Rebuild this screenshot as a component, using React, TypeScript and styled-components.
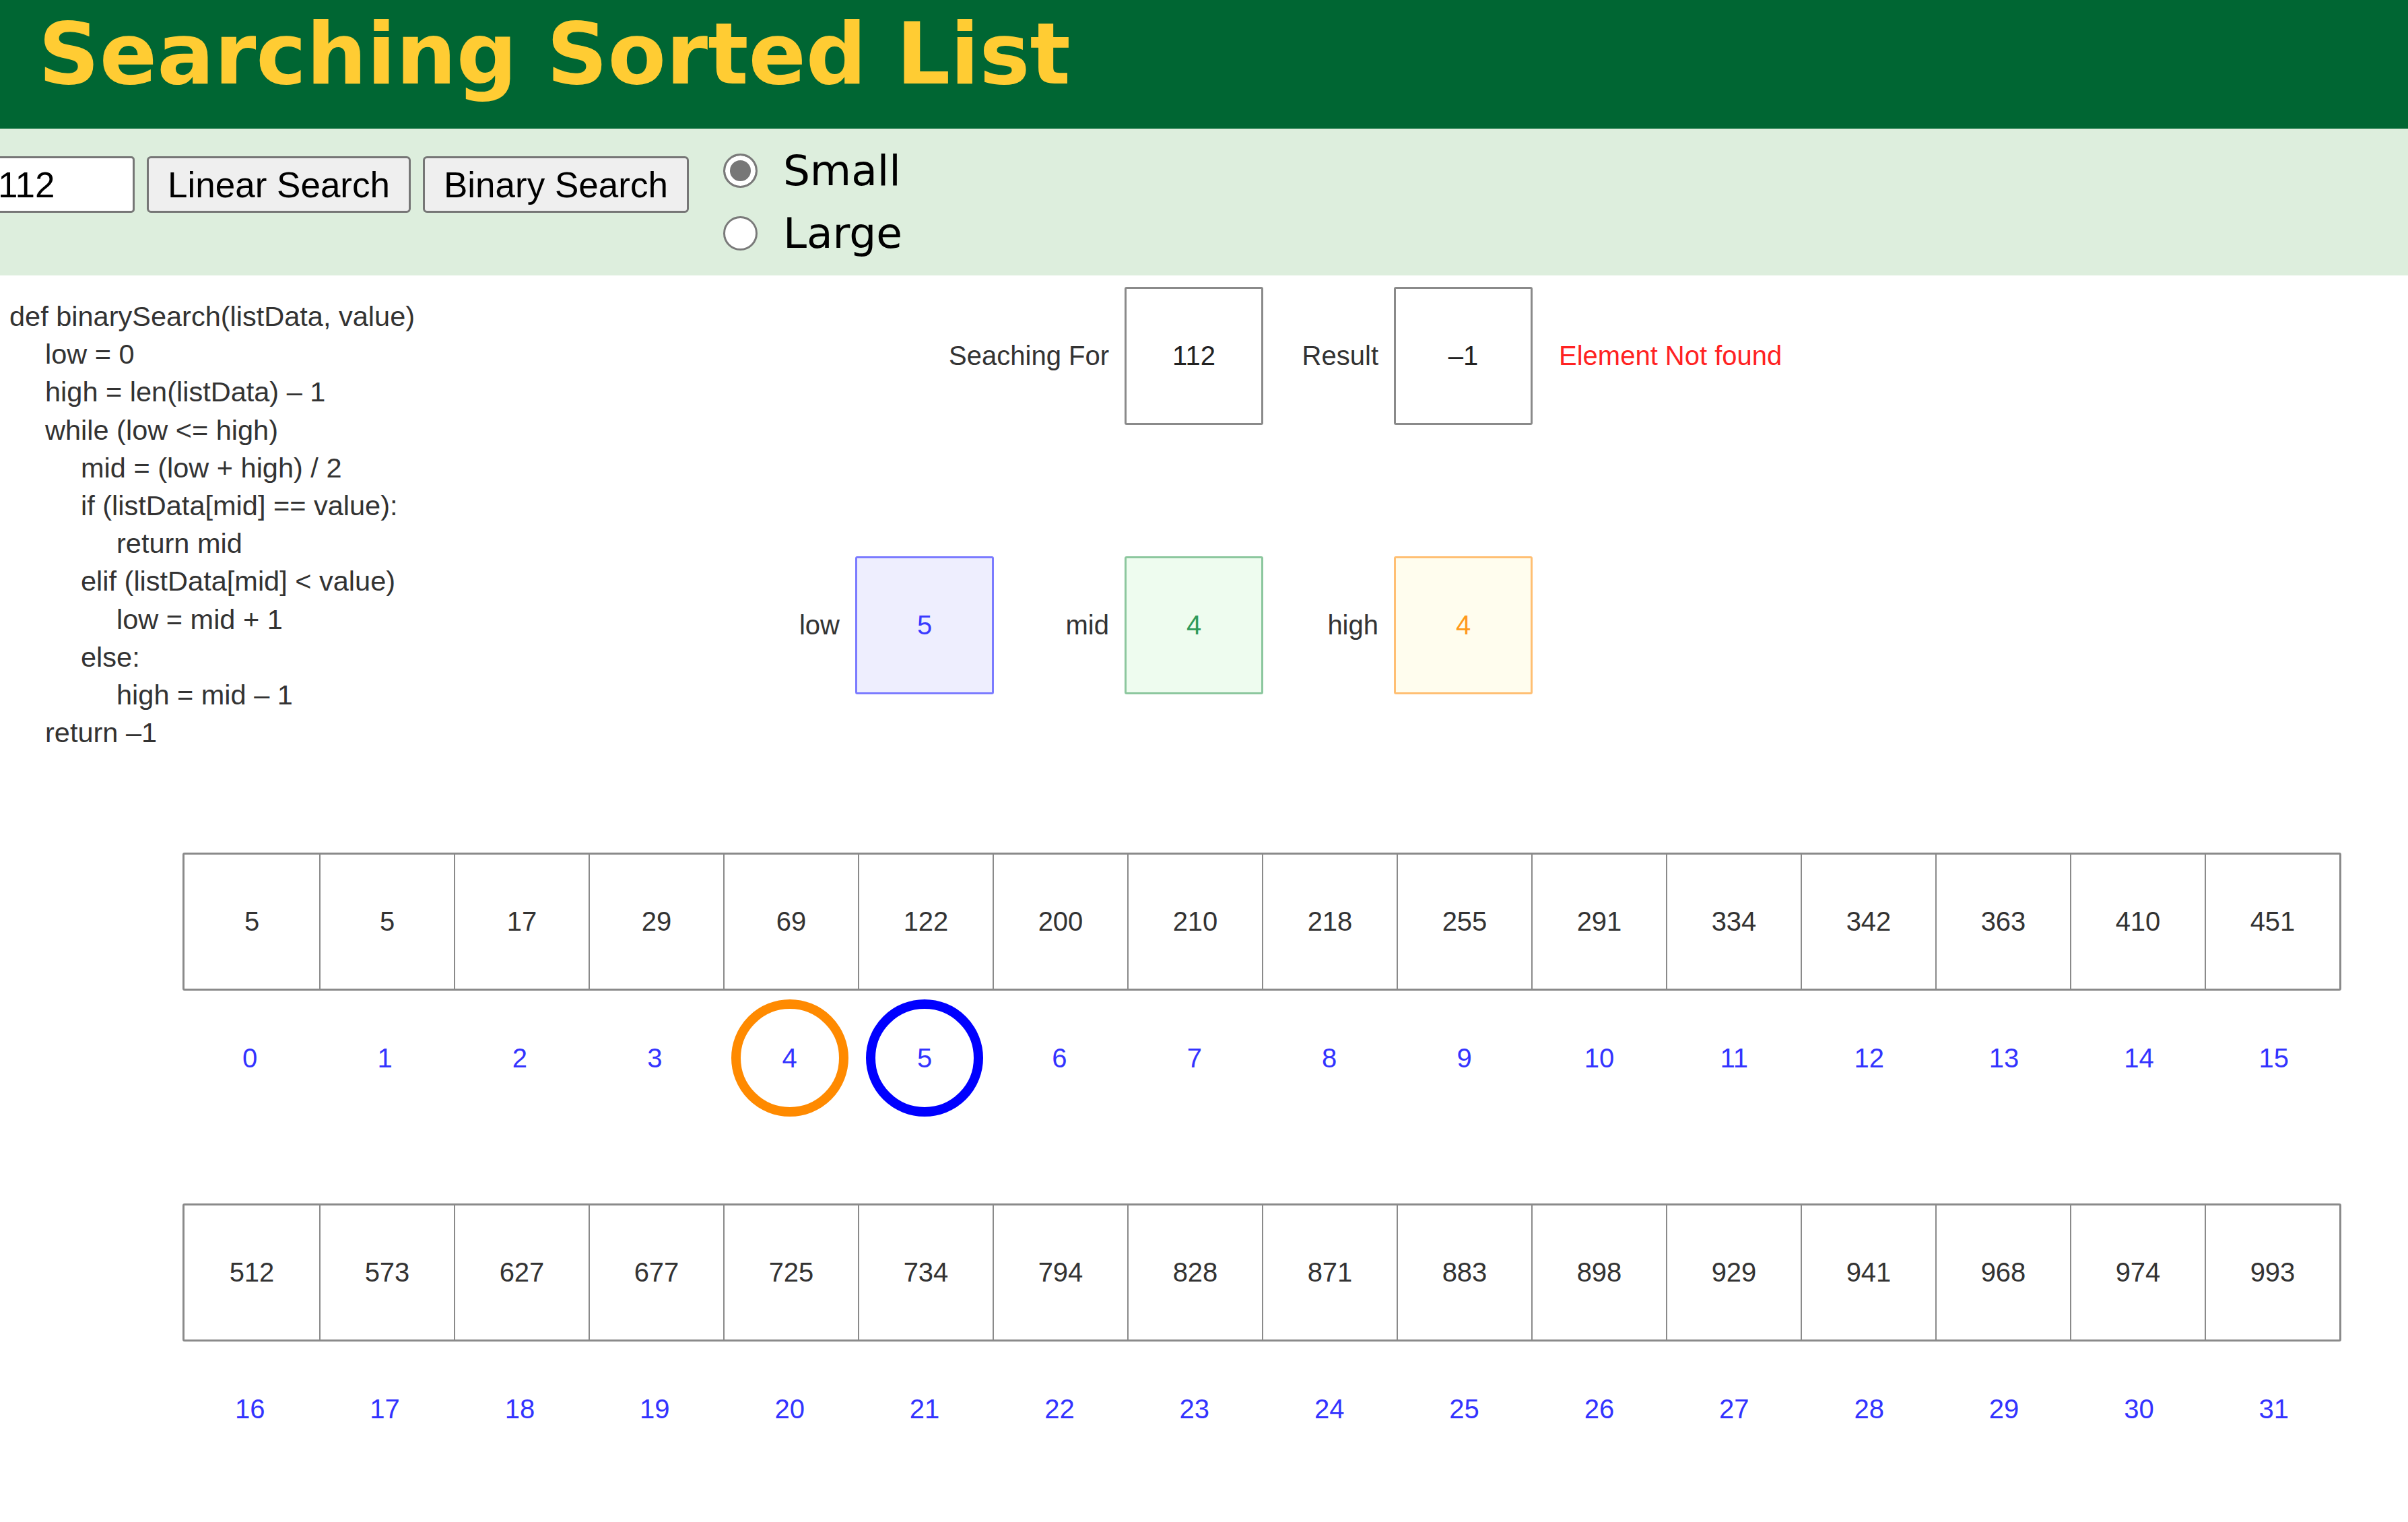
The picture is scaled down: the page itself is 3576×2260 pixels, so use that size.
import React from "react";
import styled, { createGlobalStyle } from "styled-components";

const GlobalStyle = createGlobalStyle`
  html, body {
    margin: 0;
    padding: 0;
    background: #ffffff;
    overflow: hidden;
  }
  body {
    font-family: "Liberation Sans", Arial, sans-serif;
  }
`;

const values = [
  5, 5, 17, 29, 69, 122, 200, 210, 218, 255, 291, 334, 342, 363, 410, 451,
  512, 573, 627, 677, 725, 734, 794, 828, 871, 883, 898, 929, 941, 968, 974, 993,
];

// index -> ring colour drawn round the index number
const markers: Record<number, string> = {
  4: "#ff8a00",
  5: "#0000ff",
};

const codeLines: [number, string][] = [
  [0, "def binarySearch(listData, value)"],
  [1, "low = 0"],
  [1, "high = len(listData) – 1"],
  [1, "while (low <= high)"],
  [2, "mid = (low + high) / 2"],
  [2, "if (listData[mid] == value):"],
  [3, "return mid"],
  [2, "elif (listData[mid] < value)"],
  [3, "low = mid + 1"],
  [2, "else:"],
  [3, "high = mid – 1"],
  [1, "return –1"],
];

type Tone = "plain" | "low" | "mid" | "high";

const tones: Record<Tone, { border: string; fill: string; text: string }> = {
  plain: { border: "#8a8a8a", fill: "#ffffff", text: "#222222" },
  low: { border: "#7b7bff", fill: "#eeeefe", text: "#3a3aff" },
  mid: { border: "#8cc79e", fill: "#eefcef", text: "#2f9a5a" },
  high: { border: "#ffbf73", fill: "#fffdee", text: "#ff9a1a" },
};

const chunk = (list: number[], size: number) => {
  const rows: number[][] = [];
  for (let i = 0; i < list.length; i += size) rows.push(list.slice(i, i + size));
  return rows;
};

const App = () => {
  const rows = chunk(values, 16);
  return (
    <Page>
      <GlobalStyle />
      <Header>
        <Title>Searching Sorted List</Title>
      </Header>

      <Toolbar>
        <Controls>
          <ValueInput defaultValue="112" />
          <Button>Linear Search</Button>
          <Button>Binary Search</Button>
        </Controls>
        <RadioGroup>
          <RadioRow>
            <Radio type="radio" name="size" defaultChecked />
            <RadioText>Small</RadioText>
          </RadioRow>
          <RadioRow>
            <Radio type="radio" name="size" />
            <RadioText>Large</RadioText>
          </RadioRow>
        </RadioGroup>
      </Toolbar>

      <Workspace>
        <Code>
          {codeLines.map(([level, text], i) => (
            <CodeLine key={i} $level={level}>
              {text}
            </CodeLine>
          ))}
        </Code>

        <Panel>
          <Field $col={2}>
            <FieldLabel>Seaching For</FieldLabel>
            <ValueBox $tone="plain">112</ValueBox>
          </Field>
          <Field $col={3}>
            <FieldLabel>Result</FieldLabel>
            <ValueBox $tone="plain">–1</ValueBox>
          </Field>
          <Message>Element Not found</Message>

          <Field $col={1}>
            <FieldLabel>low</FieldLabel>
            <ValueBox $tone="low">5</ValueBox>
          </Field>
          <Field $col={2}>
            <FieldLabel>mid</FieldLabel>
            <ValueBox $tone="mid">4</ValueBox>
          </Field>
          <Field $col={3}>
            <FieldLabel>high</FieldLabel>
            <ValueBox $tone="high">4</ValueBox>
          </Field>
        </Panel>
      </Workspace>

      <Arrays>
        {rows.map((row, r) => (
          <ArrayGroup key={r}>
            <Strip>
              {row.map((v, i) => (
                <Cell key={i}>{v}</Cell>
              ))}
            </Strip>
            <IndexRow>
              {row.map((_, i) => {
                const idx = r * 16 + i;
                return (
                  <IndexCell key={idx}>
                    <IndexMark $ring={markers[idx]}>{idx}</IndexMark>
                  </IndexCell>
                );
              })}
            </IndexRow>
          </ArrayGroup>
        ))}
      </Arrays>
    </Page>
  );
};

export default App;

const Page = styled.div`
  width: 3576px;
  min-height: 2260px;
  background: #ffffff;
`;

const Header = styled.header`
  height: 191px;
  background: #006633;
  padding: 7px 0 0 57px;
  box-sizing: border-box;
`;

const Title = styled.h1`
  margin: 0;
  font-family: "DejaVu Sans", Verdana, sans-serif;
  font-weight: 700;
  font-size: 126px;
  line-height: 147px;
  color: #ffcc33;
  white-space: nowrap;
`;

const Toolbar = styled.div`
  height: 218px;
  box-sizing: border-box;
  background: #ddeedd;
  padding: 16px 0;
  display: flex;
  align-items: flex-start;
`;

const Controls = styled.div`
  display: flex;
  align-items: center;
  gap: 18px;
  margin-top: 25px;
  margin-left: -10px;
`;

const ValueInput = styled.input`
  width: 210px;
  height: 84px;
  box-sizing: border-box;
  border: 3px solid #767676;
  border-radius: 5px;
  background: #ffffff;
  padding: 0 0 0 4px;
  font-family: "Liberation Sans", Arial, sans-serif;
  font-size: 53px;
  color: #000000;
  outline: none;
`;

const Button = styled.button`
  height: 84px;
  box-sizing: border-box;
  padding: 0 28px;
  border: 3px solid #767676;
  border-radius: 6px;
  background: #efefef;
  font-family: "Liberation Sans", Arial, sans-serif;
  font-size: 53px;
  color: #000000;
  white-space: nowrap;
`;

const RadioGroup = styled.div`
  display: flex;
  flex-direction: column;
  margin-left: 51px;
`;

const RadioRow = styled.label`
  display: flex;
  align-items: center;
  height: 93px;
  gap: 38px;
`;

const Radio = styled.input`
  appearance: none;
  margin: 0;
  width: 51px;
  height: 51px;
  box-sizing: border-box;
  border: 3px solid #7a7a7a;
  border-radius: 50%;
  background: #ffffff;

  &:checked {
    background: #777777;
    box-shadow: inset 0 0 0 7px #ffffff;
  }
`;

const RadioText = styled.span`
  font-family: "DejaVu Sans", Verdana, sans-serif;
  font-size: 63px;
  color: #000000;
`;

const Workspace = styled.div`
  display: flex;
  align-items: flex-start;
  padding-top: 17px;
`;

const Code = styled.div`
  width: 1076px;
  box-sizing: border-box;
  margin-top: 16px;
  padding-left: 14px;
  font-family: "Liberation Sans", Arial, sans-serif;
  font-size: 41.5px;
  line-height: 56.2px;
  color: #333333;
`;

const CodeLine = styled.div<{ $level: number }>`
  padding-left: ${(p) => p.$level * 53}px;
  white-space: pre;
`;

const Panel = styled.div`
  display: grid;
  grid-template-columns: repeat(3, 400px) auto;
  grid-template-rows: 205px 205px;
  row-gap: 195px;
  align-items: center;
`;

const Field = styled.div<{ $col: number }>`
  grid-column: ${(p) => p.$col};
  display: flex;
  align-items: center;
  justify-content: flex-end;
  gap: 23px;
  min-width: 0;
`;

const FieldLabel = styled.span`
  flex-shrink: 0;
  white-space: nowrap;
  font-size: 40px;
  color: #333333;
`;

const ValueBox = styled.div<{ $tone: Tone }>`
  flex-shrink: 0;
  width: 206px;
  height: 205px;
  box-sizing: border-box;
  display: flex;
  align-items: center;
  justify-content: center;
  border: 3px solid ${(p) => tones[p.$tone].border};
  border-radius: 3px;
  background: ${(p) => tones[p.$tone].fill};
  color: ${(p) => tones[p.$tone].text};
  font-size: 40px;
`;

const Message = styled.div`
  grid-column: 4;
  grid-row: 1;
  padding-left: 39px;
  white-space: nowrap;
  font-size: 40px;
  color: #ff2222;
`;

const Arrays = styled.div`
  margin-top: 150px;
  padding-left: 271px;
`;

const ArrayGroup = styled.div`
  width: 3206px;
  margin-bottom: 116px;
`;

const Strip = styled.div`
  display: grid;
  grid-template-columns: repeat(16, 1fr);
  height: 205px;
  box-sizing: border-box;
  border: 3px solid #8a8a8a;
  border-radius: 3px;
`;

const Cell = styled.div`
  display: flex;
  align-items: center;
  justify-content: center;
  font-size: 40px;
  color: #333333;

  & + & {
    border-left: 2px solid #8a8a8a;
  }
`;

const IndexRow = styled.div`
  display: grid;
  grid-template-columns: repeat(16, 1fr);
  height: 200px;
`;

const IndexCell = styled.div`
  display: flex;
  align-items: center;
  justify-content: center;
`;

const IndexMark = styled.span<{ $ring?: string }>`
  display: flex;
  align-items: center;
  justify-content: center;
  width: 174px;
  height: 174px;
  box-sizing: border-box;
  border-radius: 50%;
  border: 14px solid ${(p) => p.$ring ?? "transparent"};
  font-size: 40px;
  color: #3333ff;
`;
